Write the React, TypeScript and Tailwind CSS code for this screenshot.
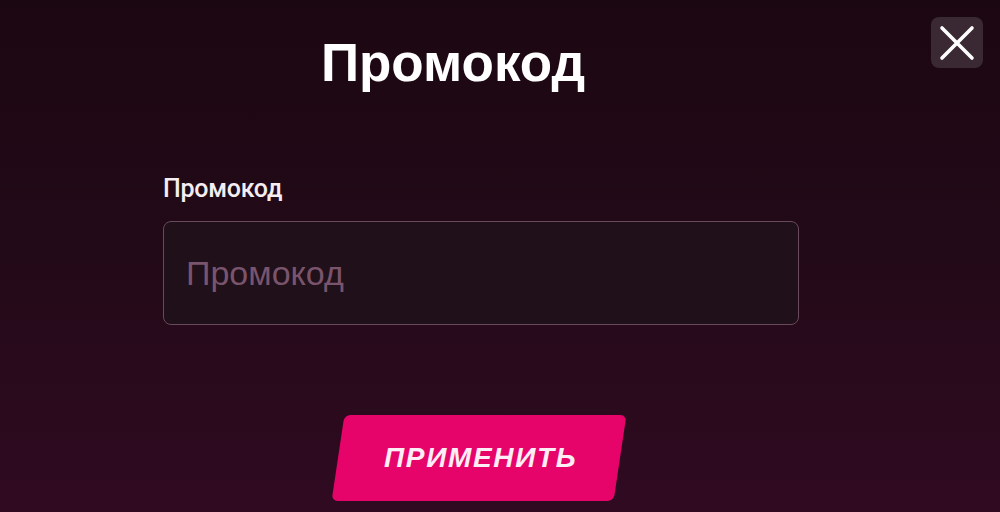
export default function App() {
  return (
    <div className="h-[512px] w-full overflow-hidden bg-linear-to-b from-[#1b0711] via-[#230a18] to-[#300a21] font-['Liberation_Sans',Arial,sans-serif]">
      {/* header: title centred in the space left of the close button */}
      <div className="flex items-start pt-[17px] pr-[17px]">
        <div className="flex flex-1 justify-center">
          <h2 className="mt-[19px] text-[53px] font-bold leading-none text-white">Промокод</h2>
        </div>
        <button className="ml-[25px] flex h-[51px] w-[52px] items-center justify-center rounded-lg bg-[#3a2833]">
          <svg viewBox="0 0 36 36" className="h-9 w-9" fill="none" stroke="white" strokeWidth="3.6" strokeLinecap="round">
            <path d="M3 3L33 33M33 3L3 33" />
          </svg>
        </button>
      </div>

      <div className="ml-[163px] mt-[87px] w-[636px]">
        <label className="block font-['Roboto',sans-serif] text-[25px] font-medium leading-none tracking-[-0.01em] text-[#f4eef2]">
          Промокод
        </label>
        <input
          type="text"
          placeholder="Промокод"
          className="mt-5 h-[104px] w-full rounded-lg border border-[#68495e] bg-[#1f1019] px-[22px] text-[34px] text-white outline-none placeholder:text-[#7a546c]"
        />
      </div>

      <div className="mt-[90px] flex justify-center pr-[42px]">
        <button className="flex h-[86px] w-[282px] -skew-x-[8.5deg] items-center justify-center rounded-md bg-[#e6046b]">
          <span className="skew-x-[8.5deg] pl-1 text-[28px] font-bold italic tracking-[0.06em] text-[#fdeef6]">
            ПРИМЕНИТЬ
          </span>
        </button>
      </div>
    </div>
  );
}
